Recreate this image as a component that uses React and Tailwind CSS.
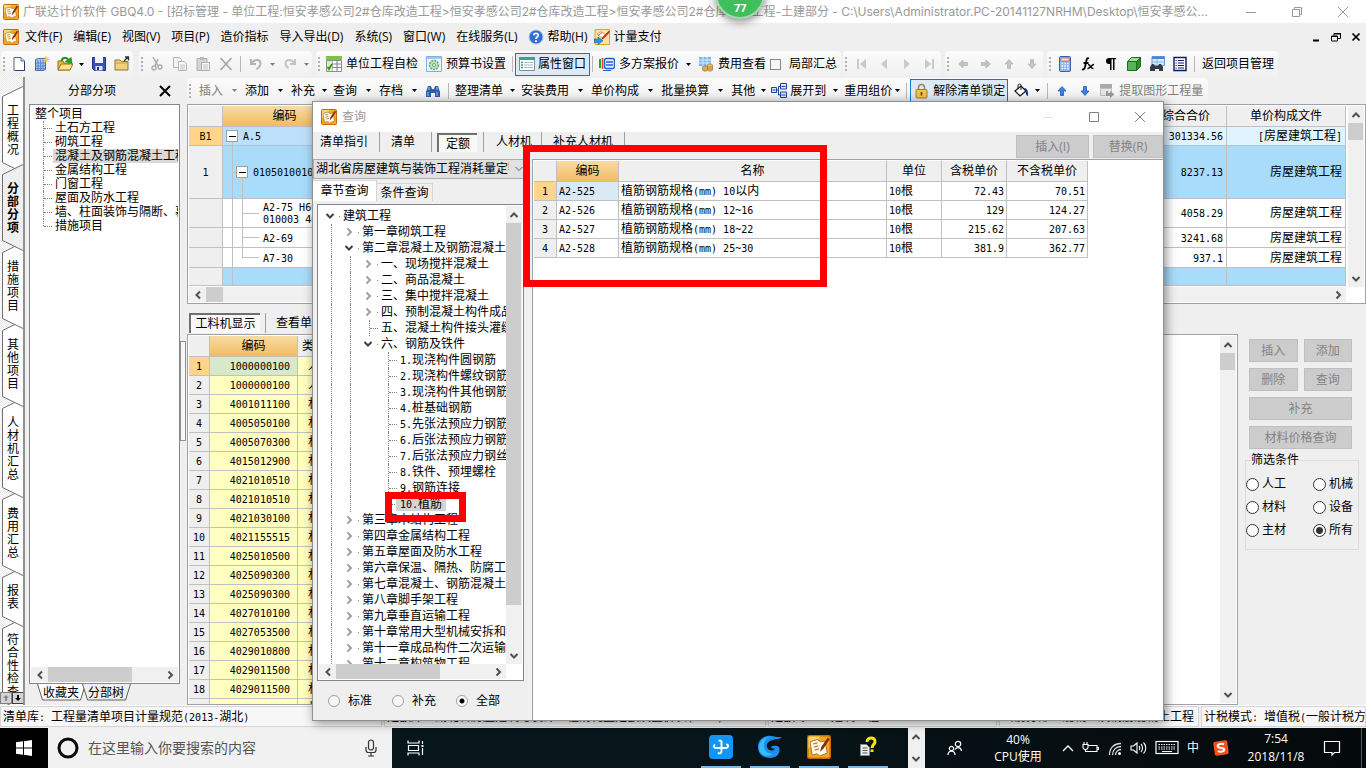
import React from "react";

/* ---------- text ---------- */

function T({ children }) {
  const parts = String(children).split(/([\x20-\x7e]+)/).filter(Boolean);
  return (
    <>
      {parts.map((p, i) =>
        /^[\x20-\x7e]+$/.test(p) ? (
          <span key={i} className="[font-family:'DejaVu_Sans_Mono',monospace] text-[10px] leading-none whitespace-pre">{p}</span>
        ) : (
          <React.Fragment key={i}>{p}</React.Fragment>
        )
      )}
    </>
  );
}

/* ---------- icons ---------- */

function Svg({ w = 16, h = 16, children, className = "" }) {
  return (
    <svg width={w} height={h} viewBox={`0 0 ${w} ${h}`} className={`block shrink-0 ${className}`} fill="none" aria-hidden="true">
      {children}
    </svg>
  );
}

function AppIcon({ size = 16 }) {
  return (
    <svg width={size} height={size} viewBox="0 0 16 16" className="block shrink-0" aria-hidden="true">
      <rect x="0.5" y="0.5" width="15" height="15" rx="1" fill="#f7a81b" stroke="#c8690a" />
      <path d="M1 1h8l-8 8z" fill="#ffd76a" />
      <path d="M2 4.500l5-1.500 2 1.500 3-.5 1.500 8-5 2-2-1.500-3 1z" fill="#fff8e8" stroke="#a8661a" strokeWidth=".6" />
      <path d="M4 6l3-.7M4.500 8l3-.7M5 10l3-.7" stroke="#b07a3a" strokeWidth=".8" />
      <path d="M14 1.500L9.500 8l-.7 3.200 2.200-2.200L15 3z" fill="#8c2a0c" />
    </svg>
  );
}

function Chev({ dir = "down", color = "#505050", size = 10, sw = 2 }) {
  const d = {
    down: "M1.500 3l3.500 3.500L8.500 3",
    up: "M1.500 7L5 3.500 8.500 7",
    left: "M7 1.500L3.500 5 7 8.500",
    right: "M3.500 1.500L7 5 3.500 8.500",
  }[dir];
  return (
    <svg width={size} height={size} viewBox="0 0 10 10" className="block shrink-0" fill="none" aria-hidden="true">
      <path d={d} stroke={color} strokeWidth={sw} />
    </svg>
  );
}

const Caret = ({ w = "w-[11px]", gray }) => (
  <span className={`flex shrink-0 justify-center ${w}`}>
    <Svg w={5} h={3}><path d="M0 0h5L2.500 3z" fill={gray ? "#808080" : "#000"} /></Svg>
  </span>
);

const IcNew = () => (
  <Svg><path d="M3 1.500h7l3.500 3.500v9.500h-10.500z" fill="#fff" stroke="#51658c" /><path d="M10 1.500v3.500h3.500" fill="#dbe6f7" stroke="#51658c" /><path d="M13.500 6v8.500H5" stroke="#273a63" /></Svg>
);
const IcBook = () => (
  <Svg><path d="M1.500 3.500l3-1h7v11l-2 1h-8z" fill="#a9c8ef" stroke="#3d6db5" /><path d="M4 4v10M6.500 4v10M9 4v10M2 7h9M2 10h9M2 12.500h9" stroke="#5a87c9" /><path d="M12 0v7M8.500 3.500h7M9.500 1l5 5M14.500 1l-5 5" stroke="#f7c52c" /></Svg>
);
const IcOpen = () => (
  <Svg><path d="M1 14V5h5l1 2h6v7z" fill="#e8b94a" stroke="#9c7413" /><path d="M1 14l3-6h12l-3 6z" fill="#ffe08a" stroke="#9c7413" /><path d="M4.500 5c1-4 5-4 7-1" stroke="#1d8b1d" strokeWidth="2" /><path d="M7.500 5.500L15.500 8.500 14.500 1z" fill="#22a022" /></Svg>
);
const IcSave = () => (
  <Svg><path d="M1.500 1.500h13v13h-11l-2-2z" fill="#3b4fb8" stroke="#25357c" /><path d="M4 1h8v6H4z" fill="#eef3ff" /><path d="M4.500 10h7v4.500h-7z" fill="#dde5f5" /><path d="M6 11h2v3H6z" fill="#25357c" /></Svg>
);
const IcFolder = () => (
  <Svg><path d="M1 14V4h5l1.500 1.500H14V14z" fill="#f1cf7c" stroke="#8f7436" /><path d="M1 7h13" stroke="#c49c46" /><path d="M10 5l4-4M11 1h3.500v3.500" stroke="#333" strokeWidth="1.300" /></Svg>
);
const IcCut = () => (
  <Svg><path d="M4 1l5 9M9 3L6 10" stroke="#aaa" strokeWidth="1.500" /><circle cx="5" cy="12" r="2" stroke="#aaa" strokeWidth="1.300" /><circle cx="11" cy="11" r="2" stroke="#aaa" strokeWidth="1.300" /></Svg>
);
const IcCopy = () => (
  <Svg><path d="M1.500 1.500h6l2 2v8h-8z" fill="#f2f2f2" stroke="#b5b5b5" /><path d="M6.500 5.500h6l2 2v7h-8z" fill="#f7f7f7" stroke="#b5b5b5" /><path d="M8 9h5M8 11h5M8 13h5" stroke="#c5c5c5" /></Svg>
);
const IcPaste = () => (
  <Svg><path d="M2 2.500h10v12H2z" fill="#d5d5d5" stroke="#b0b0b0" /><path d="M5 1h4v3H5z" fill="#bbb" /><path d="M6.500 6.500h8v8h-8z" fill="#f7f7f7" stroke="#b0b0b0" /><path d="M8 9h5M8 11h5M8 13h5" stroke="#c0c0c0" /></Svg>
);
const IcX = () => <Svg><path d="M2.500 2l11 12M13.500 2l-11 12" stroke="#a8a8a8" strokeWidth="1.800" /></Svg>;
const IcUndo = () => <Svg><path d="M3 3v5h5M3.500 7.500C6 3 12 3 12.500 7c0 3-2 5-4 6" stroke="#b5b5b5" strokeWidth="2" /></Svg>;
const IcRedo = () => <Svg><path d="M13 3v5H8M12.500 7.500C10 3 4 3 3.500 7c0 3 1 4 3 5" stroke="#c5c5c5" strokeWidth="2" /></Svg>;
const IcCheckTable = () => (
  <Svg><path d="M.5 4.500h15v11H.5z" fill="#fff" stroke="#8d8d8d" /><path d="M0 0h16v4H0z" fill="#7dc242" /><path d="M6 4v11M6 8h9M6 11.500h9M11 4v11" stroke="#8d8d8d" strokeWidth="1.200" /><path d="M1 5h5v10H1z" fill="#d7edc3" /><path d="M1.500 11l1.500 2 3-5" stroke="#2c8b1c" strokeWidth="1.600" /></Svg>
);
const IcGear = () => (
  <Svg><path d="M.5.5h15v15H.5z" fill="#eaf4ff" stroke="#7fb0dc" /><path d="M1 1h14v2H1z" fill="#9cc9ee" /><circle cx="8" cy="9" r="4.500" fill="#bfe3c1" stroke="#5fa865" strokeDasharray="2 1" strokeWidth="1.500" /><circle cx="8" cy="9" r="1.500" fill="#fff" stroke="#5fa865" /></Svg>
);
const IcProps = () => (
  <Svg><path d="M.5 1.500h15v13H.5z" fill="#fff" stroke="#7f8fa0" /><path d="M0 1h16v3H0z" fill="#3ba58d" /><path d="M2 6.500h2M2 9h2M2 11.500h2" stroke="#48a548" strokeWidth="1.300" /><path d="M5 6.500h9M5 9h9M5 11.500h9" stroke="#a9b9c9" /></Svg>
);
const IcMulti = () => (
  <Svg><path d="M1 3v9" stroke="#2ca02c" strokeWidth="2" /><path d="M3.500 2v11" stroke="#e34234" strokeWidth="1.500" /><rect x="5.500" y="2.500" width="10" height="10" rx="2" fill="#e8f1ff" stroke="#1f5fd0" strokeWidth="1.400" /><path d="M7 6h7M7 9h7" stroke="#1f5fd0" strokeWidth="1.300" /><path d="M4 14.500h8" stroke="#1f5fd0" /></Svg>
);
const IcCoins = () => (
  <Svg><path d="M1 1h12v9H1z" fill="#7fb6ea" /><path d="M1 4h12M1 7h12M5 1v9M9 1v9" stroke="#d8ecff" /><path d="M4.500 11c0-1.500 5-1.500 5 0v3c0 1.500-5 1.500-5 0z" fill="#dba85a" stroke="#a87427" strokeWidth=".7" /><path d="M9.500 9c0-1.500 5-1.500 5 0v5c0 1.500-5 1.500-5 0z" fill="#e8be74" stroke="#a87427" strokeWidth=".7" /><path d="M9.500 11h5M9.500 13h5" stroke="#a87427" strokeWidth=".7" /></Svg>
);
const Nav = ({ d }) => <Svg><path d={d} fill="#c9c9c9" /></Svg>;
const Arrow = ({ rot, fill = "#c4c4c4", stroke = "#b0b0b0" }) => (
  <Svg><g transform={`rotate(${rot} 8 8)`}><path d="M8 3.500l4 4.500H9.500v4.500h-3V8H4z" fill={fill} stroke={stroke} strokeWidth=".7" /></g></Svg>
);
const IcCalc = () => (
  <Svg><rect x="2.500" y=".5" width="11" height="15" rx="1" fill="#8db1e8" stroke="#3a5fae" /><path d="M4 2h8v3H4z" fill="#fbe0d0" stroke="#b24a3a" strokeWidth=".6" /><path d="M4.500 7.500h7.500M4.500 10h7.500M4.500 12.500h7.500" stroke="#fff" strokeWidth="1.500" strokeDasharray="1.500 1.300" /></Svg>
);
const IcFx = () => (
  <Svg><path d="M9 2.500c-2-1-2.500 1-3 4L5 11c-.4 2-1.500 3-3 2.300M3.500 7h5" stroke="#000" strokeWidth="1.800" /><path d="M8 8.500c2-.5 3 4.500 5.500 4M14 8.500c-2-.5-4 4.500-6.500 4" stroke="#000" strokeWidth="1.500" /></Svg>
);
const IcPara = () => <Svg><path d="M8 2H6a3 3 0 000 6h1v6h1.500V3.200H10V14h1.500V3.200H13V2z" fill="#000" /></Svg>;
const IcCube = () => (
  <Svg><path d="M1.500 5.500h9v9h-9z" fill="#57b457" stroke="#1d6b1d" /><path d="M1.500 5.500l4-4h9l-4 4z" fill="#9fdc9f" stroke="#1d6b1d" /><path d="M10.500 5.500l4-4v9l-4 4z" fill="#2e8b2e" stroke="#1d6b1d" /></Svg>
);
const IcBinTable = () => (
  <Svg><path d="M3 .5h12.500v9H3z" fill="#dcecff" stroke="#6b94cf" /><path d="M3 .5h12.500v2.500H3z" fill="#4d86d8" /><path d="M3 6h12M8 3v6" stroke="#8fb2e2" /><path d="M1 15v-4l2-3h2l1 2h3l1-2h2l2 3v4h-4v-2H6v2z" fill="#333a48" /></Svg>
);
const IcList = () => (
  <Svg><path d="M2 1.500h12v13H2z" fill="#fff" stroke="#0a1a66" strokeWidth="1.400" /><path d="M6 4.500h6M6 7h6M6 9.500h6M6 12h6" stroke="#0a1a66" strokeWidth="1.200" /><path d="M3.500 4.500h1.200M3.500 7h1.200M3.500 9.500h1.200M3.500 12h1.200" stroke="#0a1a66" strokeWidth="1.200" /></Svg>
);
const IcHelp = () => (
  <Svg><circle cx="8" cy="8" r="7" fill="#2f6fd8" stroke="#b4c4de" /><path d="M5.800 6.200C6 3.500 10.500 3.700 10.200 6.500 10 8 8 8.200 8 10" stroke="#fff" strokeWidth="1.800" /><path d="M7 11.200h2v1.800H7z" fill="#fff" /></Svg>
);
const IcPay = () => (
  <Svg><path d="M1 .5h14.500v15H1z" fill="#ffe3a0" stroke="#e0a030" /><path d="M3 5l4-2.500L12 6 8 9z" fill="#fff" stroke="#c98a50" strokeWidth=".7" /><path d="M15 1.500L8.500 8l-1.500 3 3-1.500L16 3z" fill="#c0341a" /><path d="M4 6.500l4-3" stroke="#d9502a" /><path d="M0 10h4V8l5 3.800L4 15.500v-2H0z" fill="#2597e0" stroke="#1568a8" strokeWidth=".6" /></Svg>
);
const IcBinoc = () => (
  <Svg><path d="M1 14V9l2-6h3l1 3h2l1-3h3l2 6v5h-5v-4H6v4z" fill="#2d5fa8" /><path d="M3 9v4M12 9v4M4 4v3M12 4v3" stroke="#9cc3f2" /></Svg>
);
const IcTree = () => (
  <Svg><path d="M.5 4.500h5v5h-5zM9.500 .5h6v5.500h-6zM9.500 9h6v5.500h-6z" fill="#d8e7fa" stroke="#1f4595" /><path d="M5.500 7h2.500M7.500 3.500v8.500M7.500 3.500h2M7.500 12h2" stroke="#1f4595" /><path d="M1.500 7h3M10.500 3.500h4M10.500 12h4" stroke="#1f4595" /></Svg>
);
const IcLock = () => (
  <Svg w={13} h={16}><path d="M3.500 7V4.500a3 3 0 016 0V7" stroke="#9b8b5a" strokeWidth="1.600" /><rect x="1" y="6.500" width="11" height="8.500" rx="1" fill="#f2c14e" stroke="#a87a1c" /><path d="M6.500 9v3.500" stroke="#6b4a0c" strokeWidth="1.700" /></Svg>
);
const IcBucket = () => (
  <Svg><path d="M2 8l6-5 5 5-6 5z" fill="#fff" stroke="#111" strokeWidth="1.200" /><path d="M5 6V2.500C5 .5 8 .5 8 2.500V7" stroke="#111" /><path d="M11 5c3 0 4.500 3 4 8-1.500 0-2.500-3-2.500-5z" fill="#1b2f8f" /></Svg>
);
const IcExtract = () => (
  <Svg><path d="M1 1h12v4H1z" fill="#aaa" /><path d="M1.500 5.500h11v7h-11z" fill="#e6e6e6" stroke="#bdbdbd" /><path d="M7 8v5h4v2l4.500-3.500L11 8v2H9V8z" fill="#9a9a9a" /></Svg>
);

/* ---------- toolbar pieces ---------- */

const Grip = ({ w = "w-[6px]" }) => (
  <span className={`flex shrink-0 flex-col items-center gap-[2px] ${w}`}>
    {[0, 1, 2, 3].map((i) => (
      <span key={i} className="h-[2px] w-[2px] bg-[#b0b0b0]" />
    ))}
  </span>
);
const Sep = ({ w = "w-[7px]" }) => (
  <span className={`flex shrink-0 justify-center ${w}`}>
    <span className="h-4 w-px bg-[#b8b8b8]" />
  </span>
);
const IconBtn = ({ label, children, w = "w-[23px]" }) => (
  <button type="button" aria-label={label} className={`flex h-6 shrink-0 items-center justify-center ${w}`}>{children}</button>
);
const LabelBtn = ({ icon, children }) => (
  <button type="button" className="flex h-6 shrink-0 items-center gap-1 px-1">
    {icon}
    <span>{children}</span>
  </button>
);
const Group = ({ children, className = "" }) => (
  <div className={`flex h-[26px] shrink-0 items-center rounded-sm bg-linear-to-b from-[#fbfbfb] to-[#f0f0f0] ${className}`}>{children}</div>
);
const DropText = ({ children, w = "w-[22px]", gray }) => (
  <button type="button" className={`flex h-6 shrink-0 items-center ${gray ? "text-[#808080]" : ""}`}>
    <span>{children}</span>
    <Caret w={w} gray={gray} />
  </button>
);

function TitleBar() {
  return (
    <header className="relative flex h-[23px] shrink-0 items-center bg-white pl-[3px] text-[#999]">
      <AppIcon />
      <h1 className="ml-1 min-w-0 flex-1 overflow-hidden whitespace-nowrap [font-family:'Inter','Noto_Sans_CJK_SC',sans-serif]">
        广联达计价软件 GBQ4.0 - [招标管理 - 单位工程:恒安孝感公司2#仓库改造工程&gt;恒安孝感公司2#仓库改造工程&gt;恒安孝感公司2#仓库改造工程-土建部分 - C:\Users\Administrator.PC-20141127NRHM\Desktop\恒安孝感公...
      </h1>
      <div className="flex shrink-0">
        <IconBtn label="最小化" w="w-[46px]"><Svg w={10} h={10}><path d="M0 5.500h10" stroke="#999" /></Svg></IconBtn>
        <IconBtn label="还原" w="w-[46px]"><Svg w={10} h={10}><path d="M.5 2.500h7v7h-7zM2.500 2V.5h7v7H8" stroke="#999" /></Svg></IconBtn>
        <IconBtn label="关闭" w="w-[46px]"><Svg w={10} h={10}><path d="M0 0l10 10M10 0L0 10" stroke="#999" /></Svg></IconBtn>
      </div>
      <div className="absolute -top-[31px] left-[54.200%] z-30 flex h-[50px] w-[50px] -translate-x-1/2 items-end justify-center rounded-full border-2 border-[#a5d8b0] bg-[#3fbf5c] text-[11px] leading-[18px] font-bold text-white shadow-[0_3px_8px_rgba(0,0,0,0.45)]">77</div>
    </header>
  );
}

function MenuBar() {
  const items = ["文件(F)", "编辑(E)", "视图(V)", "项目(P)", "造价指标", "导入导出(D)", "系统(S)", "窗口(W)", "在线服务(L)"];
  return (
    <nav className="flex h-7 shrink-0 items-center pl-[3px]">
      <AppIcon />
      <div className="ml-[6px] flex gap-[11px] whitespace-nowrap">
        {items.map((t) => <button key={t} type="button">{t}</button>)}
        <button type="button" className="-ml-px flex items-center gap-1"><IcHelp />帮助(H)</button>
      </div>
      <button type="button" className="ml-[6px] flex items-center gap-1"><IcPay />计量支付</button>
      <div className="ml-auto flex items-center gap-2 pr-1">
        <Svg w={12} h={12}><path d="M3 9.500h6" stroke="#000" strokeWidth="2" /></Svg>
        <Svg w={12} h={12}><path d="M1.500 5h6v5h-6zM4 4.500V2.500h6.500v5H8M1 5.500h7M4 3h7" stroke="#000" /></Svg>
        <Svg w={12} h={12}><path d="M2.500 2.500l7 7M9.500 2.500l-7 7" stroke="#000" strokeWidth="1.700" /></Svg>
      </div>
    </nav>
  );
}

function MainToolbar() {
  return (
    <div className="flex h-[26px] shrink-0 items-center overflow-hidden pl-px whitespace-nowrap">
      <Group>
        <Grip />
        <IconBtn label="新建"><IcNew /></IconBtn>
        <IconBtn label="新建单位工程"><IcBook /></IconBtn>
        <IconBtn label="打开"><IcOpen /></IconBtn>
        <Caret />
        <IconBtn label="保存"><IcSave /></IconBtn>
        <IconBtn label="导出"><IcFolder /></IconBtn>
      </Group>
      <Group className="ml-[6px]">
        <Grip />
        <IconBtn label="剪切"><IcCut /></IconBtn>
        <IconBtn label="复制"><IcCopy /></IconBtn>
        <IconBtn label="粘贴"><IcPaste /></IconBtn>
        <IconBtn label="删除"><IcX /></IconBtn>
        <Sep />
        <IconBtn label="撤销"><IcUndo /></IconBtn>
        <Caret gray />
        <IconBtn label="恢复"><IcRedo /></IconBtn>
        <Caret gray />
      </Group>
      <Group className="ml-1">
        <Grip />
        <LabelBtn icon={<IcCheckTable />}>单位工程自检</LabelBtn>
        <LabelBtn icon={<IcGear />}>预算书设置</LabelBtn>
        <Sep w="w-[5px]" />
        <button type="button" className="flex h-[23px] items-center gap-[3px] border border-[#1177d1] bg-[#dceaf7] px-[3px]"><IcProps />属性窗口</button>
        <Sep w="w-[5px]" />
        <LabelBtn icon={<IcMulti />}>多方案报价</LabelBtn>
        <Caret />
        <LabelBtn icon={<IcCoins />}>费用查看</LabelBtn>
        <label className="flex items-center gap-2 pr-1">
          <input type="checkbox" className="h-[11px] w-[11px] appearance-none border border-[#888] bg-[#f7f7f7]" />
          局部汇总
        </label>
      </Group>
      <Group className="ml-[2px]">
        <Grip />
        <IconBtn label="首条"><Nav d="M4 3h2v10H4zM13 3v10L7 8z" /></IconBtn>
        <IconBtn label="上一条"><Nav d="M11 3v10L5 8z" /></IconBtn>
        <IconBtn label="下一条"><Nav d="M5 3v10l6-5z" /></IconBtn>
        <IconBtn label="末条"><Nav d="M3 3v10l6-5zM10 3h2v10h-2z" /></IconBtn>
      </Group>
      <Group className="ml-1">
        <Grip />
        <IconBtn label="左移"><Arrow rot={-90} /></IconBtn>
        <IconBtn label="右移"><Arrow rot={90} /></IconBtn>
        <IconBtn label="上移"><Arrow rot={0} /></IconBtn>
        <IconBtn label="下移"><Arrow rot={180} /></IconBtn>
      </Group>
      <Group className="ml-1">
        <Grip />
        <IconBtn label="计算器"><IcCalc /></IconBtn>
        <IconBtn label="函数"><IcFx /></IconBtn>
        <IconBtn label="段落"><IcPara /></IconBtn>
        <IconBtn label="图形"><IcCube /></IconBtn>
        <IconBtn label="查表"><IcBinTable /></IconBtn>
        <IconBtn label="列表"><IcList /></IconBtn>
        <Sep />
        <LabelBtn>返回项目管理</LabelBtn>
      </Group>
    </div>
  );
}

function EditToolbar() {
  return (
    <div className="flex h-[27px] shrink-0 items-center overflow-hidden whitespace-nowrap">
      <Group>
        <Grip />
        <span className="w-[6px]" />
        <DropText gray>插入</DropText>
        <DropText>添加</DropText>
        <DropText w="w-[18px]">补充</DropText>
        <DropText>查询</DropText>
        <DropText>存档</DropText>
        <IconBtn label="查找" w="w-4"><IcBinoc /></IconBtn>
        <Sep w="w-[14px]" />
        <DropText w="w-[18px]">整理清单</DropText>
        <DropText>安装费用</DropText>
        <DropText>单价构成</DropText>
        <DropText>批量换算</DropText>
        <DropText w="w-4">其他</DropText>
        <IcTree />
        <span className="w-[3px]" />
        <DropText w="w-[18px]">展开到</DropText>
        <DropText w="w-[11px]">重用组价</DropText>
        <Sep />
        <button type="button" className="flex h-[23px] items-center gap-[5px] border border-[#1177d1] bg-[#dceaf7] pr-[2px] pl-1"><IcLock />解除清单锁定</button>
        <span className="w-[5px]" />
        <IconBtn label="颜色" w="w-4"><IcBucket /></IconBtn>
        <Caret w="w-4" />
        <Sep w="w-[5px]" />
        <IconBtn label="上移"><Arrow rot={0} fill="#3f7fe8" stroke="#1d4fb0" /></IconBtn>
        <IconBtn label="下移"><Arrow rot={180} fill="#3f7fe8" stroke="#1d4fb0" /></IconBtn>
        <button type="button" className="flex items-center gap-1 px-[3px] text-[#808080]"><IcExtract />提取图形工程量</button>
        <span className="w-[2px]" />
      </Group>
    </div>
  );
}

/* ---------- scroll bars ---------- */

const VBar = ({ thumb, className = "" }) => (
  <div className={`flex w-4 shrink-0 flex-col items-center bg-[#f0f0f0] ${className}`}>
    <span className="flex h-[17px] items-center"><Chev dir="up" /></span>
    <div className="flex w-full flex-1 flex-col">
      <div className={`w-[15px] bg-[#cdcdcd] ${thumb}`} />
    </div>
    <span className="flex h-[17px] items-center"><Chev dir="down" /></span>
  </div>
);
const HBar = ({ thumb }) => (
  <div className="flex h-[15px] shrink-0 items-center bg-[#f0f0f0]">
    <span className="flex w-[17px] justify-center"><Chev dir="left" /></span>
    <div className="flex h-full flex-1"><div className={`h-full bg-[#cdcdcd] ${thumb}`} /></div>
    <span className="flex w-[17px] justify-center"><Chev dir="right" /></span>
  </div>
);

/* ---------- left side ---------- */

const sideTabs = [
  { t: "工程概况", h: 87, hc: "h-[87px]", z: "z-[1]" },
  { t: "分部分项", h: 87, hc: "h-[87px]", z: "z-10", active: true },
  { t: "措施项目", h: 87, hc: "h-[87px]", z: "z-[8]" },
  { t: "其他项目", h: 87, hc: "h-[87px]", z: "z-[7]" },
  { t: "人材机汇总", h: 100, hc: "h-[100px]", z: "z-[6]" },
  { t: "费用汇总", h: 87, hc: "h-[87px]", z: "z-[5]" },
  { t: "报表", h: 60, hc: "h-[60px]", z: "z-[4]" },
  { t: "符合性检查", h: 94, hc: "h-[94px]", z: "z-[3]" },
];

function SideTabs() {
  return (
    <div className="relative flex w-[25px] shrink-0 flex-col overflow-hidden border-r-2 border-[#909090] bg-[repeating-conic-gradient(#e9e9e9_0_25%,#fff_0_50%)] bg-size-[2px_2px] pt-[18px]">
      {sideTabs.map((s) => (
        <button key={s.t} type="button" className={`relative -mt-[9px] flex w-[23px] shrink-0 justify-center pl-[3px] ${s.hc} ${s.z}`}>
          <svg width="23" height={s.h} className="absolute top-0 left-0" aria-hidden="true">
            <path d={`M23 .5L2.500 10.500V${s.h - 10.5}L23 ${s.h - 0.5}`} fill={s.active ? "#efefef" : "#fff"} stroke="#707070" />
          </svg>
          <span className={`relative w-3 self-center leading-[13px] break-all ${s.active ? "font-bold" : ""}`}>{s.t}</span>
        </button>
      ))}
      <div className="absolute bottom-px left-0 z-20 flex bg-[#efefef]">
        <button type="button" aria-label="上滚" className="flex h-3 w-3 items-center justify-center border border-[#808080] bg-[#d4d4d4]"><Svg w={8} h={8}><path d="M4 1l3 3H5v3H3V4H1z" fill="#888" /></Svg></button>
        <button type="button" aria-label="下滚" className="flex h-3 w-3 items-center justify-center border border-[#404040] bg-[#d4d4d4]"><Svg w={8} h={8}><path d="M4 7l3-3H5V1H3v3H1z" fill="#000" /></Svg></button>
      </div>
    </div>
  );
}

const sections = ["土石方工程", "砌筑工程", "混凝土及钢筋混凝土工程", "金属结构工程", "门窗工程", "屋面及防水工程", "墙、柱面装饰与隔断、幕墙工程", "措施项目"];

function SectionPanel() {
  return (
    <aside className="flex w-[155px] shrink-0 flex-col pl-1">
      <div className="flex h-[27px] shrink-0 items-center">
        <h2 className="ml-[39px] flex-1">分部分项</h2>
        <button type="button" aria-label="关闭" className="mr-[9px]"><Svg w={12} h={12}><path d="M1 1l10 10M11 1L1 11" stroke="#000" strokeWidth="2" /></Svg></button>
      </div>
      <div className="flex min-h-0 flex-1 flex-col border border-[#828790] bg-white p-px">
        <div className="min-h-0 flex-1 overflow-hidden pt-px">
          <div className="pl-1 leading-[14px]">整个项目</div>
          <ul>
            {sections.map((s, i) => (
              <li key={s} className="flex h-[14px] pl-3 leading-[14px] whitespace-nowrap">
                <span className={`w-px border-l border-dotted border-[#808080] ${i === sections.length - 1 ? "h-[7px]" : "h-full"}`} />
                <span className="mt-[7px] h-px w-2 border-t border-dotted border-[#808080]" />
                <span className={`ml-px flex-1 overflow-hidden pl-[2px] ${i === 2 ? "bg-[#d9d9d9]" : ""}`}>{s}</span>
              </li>
            ))}
          </ul>
        </div>
        <HBar thumb="w-[74%]" />
      </div>
      <div className="flex h-[21px] shrink-0 items-start pl-2">
        {["收藏夹", "分部树"].map((t, i) => (
          <button key={t} type="button" className={`relative h-[17px] w-[48px] ${i ? "-ml-[3px]" : ""}`}>
            <svg width="50" height="17" className="absolute top-0 left-0" aria-hidden="true"><path d="M.5 0l5 16h38l5-16" fill={i ? "#efefef" : "#fff"} stroke="#606060" /></svg>
            <span className="relative leading-4">{t}</span>
          </button>
        ))}
      </div>
    </aside>
  );
}

/* ---------- tables ---------- */

const line = "border-[#c0c0c0]";
const orange = "bg-linear-to-b from-[#f9dba2] to-[#f0bd60] font-normal";

const MinusBox = () => (
  <span className="relative z-[1] flex h-3 w-3 shrink-0 items-center justify-center border border-[#a0a0a0] bg-white"><span className="h-px w-[7px] bg-black" /></span>
);

function CodeTree({ level, last, h, children }) {
  return (
    <div className={`relative flex items-center overflow-hidden whitespace-nowrap ${h}`}>
      {level === 0 && (
        <>
          <span className="w-[3px]" /><MinusBox /><span className="w-[5px]" />
          <span className={`absolute bottom-0 left-[9px] h-1 border-l ${line}`} />
        </>
      )}
      {level === 1 && (
        <>
          <span className={`w-[10px] self-stretch border-r ${line}`} />
          <span className="h-px w-[3px] bg-[#c0c0c0]" /><MinusBox /><span className="w-[5px]" />
          <span className={`absolute bottom-0 left-[19px] h-1/2 border-l ${line}`} />
        </>
      )}
      {level === 2 && (
        <>
          <span className={`w-[10px] self-stretch border-r ${line}`} />
          <span className={`w-[10px] border-r ${line} ${last ? "h-1/2 self-start" : "self-stretch"}`} />
          <span className="h-px w-4 bg-[#c0c0c0]" /><span className="w-1" />
        </>
      )}
      {level === 3 && <span className={`w-[10px] self-stretch border-r ${line}`} />}
      <span className="leading-3">{children}</span>
    </div>
  );
}

const billRows = [
  { no: "B1", code: "A.5", level: 0, h: "h-[18px]", total: "301334.56", file: "[房屋建筑工程]", left: "bg-[#bde0fa]", right: "bg-[#e1f3ff]" },
  { no: "1", code: "010501001001", level: 1, h: "h-[52px]", total: "8237.13", file: "房屋建筑工程", left: "bg-[#a9dbfb]", right: "bg-[#a9dbfb]" },
  { no: "", code: "A2-75 H60", code2: "010003 40", level: 2, h: "h-[28px]", total: "4058.29", file: "房屋建筑工程" },
  { no: "", code: "A2-69", level: 2, h: "h-[19px]", total: "3241.68", file: "房屋建筑工程" },
  { no: "", code: "A7-30", level: 2, last: true, h: "h-[19px]", total: "937.1", file: "房屋建筑工程" },
  { no: "", code: "", level: 3, h: "h-[17px]", total: "", file: "", left: "bg-[#a9dbfb]", right: "bg-[#a9dbfb]" },
];

function BillTable() {
  return (
    <div className="flex h-[200px] shrink-0 flex-col border border-[#a0a0a8] bg-white p-px">
      <div className="flex min-h-0 flex-1 overflow-hidden">
        <div className="min-w-0 flex-1">
          <table className="w-full table-fixed border-separate border-spacing-0">
            <colgroup><col className="w-[34px]" /><col className="w-[124px]" /><col /><col className="w-[90px]" /><col className="w-[119px]" /></colgroup>
            <thead>
              <tr className="h-[21px] bg-[#efefef]">
                <th className={`border-r border-b p-0 ${line}`} />
                <th className={`border-r border-b p-0 ${line} ${orange}`}>编码</th>
                <th className={`border-r border-b p-0 ${line}`} />
                <th className={`border-r border-b p-0 pr-4 text-right font-normal ${line}`}>综合合价</th>
                <th className={`border-r border-b p-0 font-normal ${line}`}>单价构成文件</th>
              </tr>
            </thead>
            <tbody>
              {billRows.map((r, i) => (
                <tr key={i}>
                  <td className={`border-r border-b p-0 text-center ${line} ${i === 0 ? "bg-[#ffd58c]" : "bg-[#efefef]"}`}><T>{r.no}</T></td>
                  <td className={`border-r border-b p-0 ${line} ${r.left || ""}`}>
                    <CodeTree level={r.level} last={r.last} h={r.h}><T>{r.code}</T>{r.code2 && <><br /><T>{r.code2}</T></>}</CodeTree>
                  </td>
                  <td className={`border-r border-b p-0 ${line} ${r.right || ""}`} />
                  <td className={`border-r border-b p-0 pr-[3px] text-right ${line} ${r.right || ""}`}><T>{r.total}</T></td>
                  <td className={`border-r border-b p-0 pr-[3px] text-right ${line} ${r.right || ""}`}><T>{r.file}</T></td>
                </tr>
              ))}
            </tbody>
          </table>
        </div>
        <VBar className="ml-[2px]" thumb="h-[17px]" />
      </div>
      <div className="mr-[18px]"><HBar thumb="w-[17px]" /></div>
    </div>
  );
}

const resCodes = ["1000000100", "1000000100", "4001011100", "4005050100", "4005070300", "4015012900", "4021010510", "4021010510", "4021030100", "4021155515", "4025010500", "4025090300", "4025090300", "4027010100", "4027053500", "4029010800", "4029011500", "4029011500", "4030200111"];

function ResourceTable() {
  return (
    <div className="flex min-w-0 flex-1 overflow-hidden border border-[#a0a0a8] bg-white p-px">
      <div className="min-w-0 flex-1">
        <table className="w-[320px] table-fixed border-separate border-spacing-0">
          <colgroup><col className="w-[21px]" /><col className="w-[88px]" /><col className="w-[35px]" /><col /></colgroup>
          <thead>
            <tr className="h-[21px] bg-[#efefef]">
              <th className={`border-r border-b p-0 ${line}`} />
              <th className={`border-r border-b p-0 ${line} ${orange}`}>编码</th>
              <th className={`border-r border-b p-0 pl-1 text-left font-normal whitespace-nowrap ${line}`}>类别</th>
              <th className={`border-r border-b p-0 ${line}`} />
            </tr>
          </thead>
          <tbody>
            {resCodes.map((c, i) => (
              <tr key={i} className="h-[19px]">
                <td className={`border-r border-b p-0 text-center leading-4 ${line} ${i === 0 ? "bg-[#ffd58c]" : "bg-[#efefef]"}`}><T>{i + 1}</T></td>
                <td className={`border-r border-b p-0 pr-[7px] text-right leading-4 ${line} ${i === 0 ? "bg-[#d8e9c8]" : "bg-[#ffffc0]"}`}><T>{c}</T></td>
                <td className={`border-r border-b bg-[#ffffc0] p-0 pl-[10px] leading-4 ${line}`}>{i < 2 ? "人" : "材"}</td>
                <td className={`border-r border-b bg-[#ffffc0] p-0 ${line}`} />
              </tr>
            ))}
          </tbody>
        </table>
      </div>
      <VBar thumb="h-[17px]" />
    </div>
  );
}

const GrayBtn = ({ children, className = "" }) => (
  <button type="button" disabled className={`h-[23px] border border-[#bfbfbf] bg-[#cccccc] text-[#838383] ${className}`}>{children}</button>
);

const radioBase = "h-[13px] w-[13px] shrink-0 appearance-none rounded-full border bg-white";

function SideButtons() {
  const opts = ["人工", "机械", "材料", "设备", "主材", "所有"];
  return (
    <div className="flex w-[128px] shrink-0 flex-col pt-[5px] pr-[7px] pl-[7px]">
      <div className="ml-1 grid w-[103px] grid-cols-2 gap-x-[6px] gap-y-[6px]">
        <GrayBtn>插入</GrayBtn>
        <GrayBtn>添加</GrayBtn>
        <GrayBtn>删除</GrayBtn>
        <GrayBtn>查询</GrayBtn>
        <GrayBtn className="col-span-2">补充</GrayBtn>
        <GrayBtn className="col-span-2">材料价格查询</GrayBtn>
      </div>
      <fieldset className="mt-[3px] h-[98px] border border-[#dcdcdc]">
        <legend className="ml-[5px] leading-4">筛选条件</legend>
        <div className="grid grid-cols-[67px_1fr] gap-y-[7px] pt-2">
          {opts.map((o) => (
            <label key={o} className="flex h-4 items-center gap-[3px] whitespace-nowrap">
              <input type="radio" name="filter" defaultChecked={o === "所有"} className={`${radioBase} border-[#333] checked:bg-[radial-gradient(circle,#333_0_3px,#fff_4px)]`} />
              {o}
            </label>
          ))}
        </div>
      </fieldset>
    </div>
  );
}

/* ---------- query dialog ---------- */

const nodes = [
  [0, "open", "建筑工程"],
  [1, "closed", "第一章砌筑工程"],
  [1, "open", "第二章混凝土及钢筋混凝土工程"],
  [2, "closed", "一、现场搅拌混凝土"],
  [2, "closed", "二、商品混凝土"],
  [2, "closed", "三、集中搅拌混凝土"],
  [2, "closed", "四、预制混凝土构件成品"],
  [2, "leaf", "五、混凝土构件接头灌缝"],
  [2, "open", "六、钢筋及铁件"],
  [3, "leaf", "1.现浇构件圆钢筋"],
  [3, "leaf", "2.现浇构件螺纹钢筋"],
  [3, "leaf", "3.现浇构件其他钢筋"],
  [3, "leaf", "4.桩基础钢筋"],
  [3, "leaf", "5.先张法预应力钢筋"],
  [3, "leaf", "6.后张法预应力钢筋"],
  [3, "leaf", "7.后张法预应力钢丝束"],
  [3, "leaf", "8.铁件、预埋螺栓"],
  [3, "leaf", "9.钢筋连接"],
  [3, "last", "10.植筋"],
  [1, "closed", "第三章木结构工程"],
  [1, "closed", "第四章金属结构工程"],
  [1, "closed", "第五章屋面及防水工程"],
  [1, "closed", "第六章保温、隔热、防腐工程"],
  [1, "closed", "第七章混凝土、钢筋混凝土"],
  [1, "closed", "第八章脚手架工程"],
  [1, "closed", "第九章垂直运输工程"],
  [1, "closed", "第十章常用大型机械安拆和"],
  [1, "closed", "第十一章成品构件二次运输"],
  [1, "closed", "第十二章构筑物工程"],
];

function ChapterTree() {
  return (
    <ul className="min-h-0 min-w-0 flex-1 overflow-hidden pt-[2px]">
      {nodes.map(([level, kind, text]) => (
        <li key={text} className="flex h-4 items-center leading-4 whitespace-nowrap">
          {Array.from({ length: level }, (_, g) => (
            <span key={g} className="flex w-[19px] shrink-0 self-stretch pl-3">
              {g < 2 && <span className="border-l border-dotted border-[#808080]" />}
            </span>
          ))}
          <span className="flex w-6 shrink-0 items-center self-stretch">
            {kind === "open" || kind === "closed" ? (
              <>
                <span className="w-[6px]" />
                <Chev dir={kind === "open" ? "down" : "right"} color={kind === "open" ? "#404040" : "#a0a0a0"} />
                <span className="ml-1 h-px w-px bg-[#808080]" />
              </>
            ) : (
              <>
                <span className={`ml-3 border-l border-dotted border-[#808080] ${kind === "last" ? "h-1/2 self-start" : "self-stretch"}`} />
                <span className="w-2 border-t border-dotted border-[#808080]" />
              </>
            )}
          </span>
          <span className={kind === "last" ? "-ml-1 h-[14px] bg-[#d4d4d4] pr-1 pl-1 leading-[14px]" : ""}><T>{text}</T></span>
        </li>
      ))}
    </ul>
  );
}

const quota = [
  ["A2-525", "植筋钢筋规格(mm) 10以内", "10根", "72.43", "70.51"],
  ["A2-526", "植筋钢筋规格(mm) 12~16", "10根", "129", "124.27"],
  ["A2-527", "植筋钢筋规格(mm) 18~22", "10根", "215.62", "207.63"],
  ["A2-528", "植筋钢筋规格(mm) 25~30", "10根", "381.9", "362.77"],
];

const DTab = ({ children, className = "" }) => (
  <button type="button" className={`h-5 border-r border-[#a0a0a0] text-left ${className}`}>{children}</button>
);

function QueryDialog() {
  return (
    <section role="dialog" aria-label="查询" className="absolute top-[101px] left-[312px] z-20 flex h-[620px] w-[852px] flex-col border border-[#909090] bg-[#efefef] shadow-[2px_2px_10px_rgba(0,0,0,0.45)]">
      <div className="flex h-[30px] shrink-0 items-center bg-white pl-2 text-[#999]">
        <AppIcon />
        <h2 className="ml-[5px] flex-1">查询</h2>
        <button type="button" aria-label="最小化" className="flex w-[46px] justify-center"><Svg w={10} h={10}><path d="M0 5.500h10" stroke="#e0e0e0" /></Svg></button>
        <button type="button" aria-label="最大化" className="flex w-[46px] justify-center"><Svg w={10} h={10}><path d="M.5.5h9v9h-9z" stroke="#808080" /></Svg></button>
        <button type="button" aria-label="关闭" className="flex w-[46px] justify-center"><Svg w={10} h={10}><path d="M0 0l10 10M10 0L0 10" stroke="#808080" /></Svg></button>
      </div>
      <div className="flex h-[27px] shrink-0 items-start overflow-hidden">
        <DTab className="w-[67px] pl-[7px]">清单指引</DTab>
        <DTab className="w-[52px] pl-[11px]">清单</DTab>
        <button type="button" className="mt-px ml-[5px] h-[19px] w-10 border-t-2 border-l-2 border-[#707070] bg-[#f8f8f8] leading-4">定额</button>
        <DTab className="w-[7px]">{""}</DTab>
        <DTab className="w-[58px] pl-3">人材机</DTab>
        <DTab className="w-[83px] pl-[11px]">补充人材机</DTab>
        <GrayBtn className="mt-[3px] ml-auto w-[73px]">插入(I)</GrayBtn>
        <GrayBtn className="mt-[3px] ml-1 w-[70px]">替换(R)</GrayBtn>
      </div>
      <div className="flex min-h-0 flex-1">
        <div className="flex w-[213px] shrink-0 flex-col">
          <div className="relative flex h-5 shrink-0">
            <select aria-label="定额库" className="h-5 w-full appearance-none overflow-hidden border border-[#adadad] bg-[#e1e1e1] pr-4 pl-[2px] leading-4 text-clip">
              <option>湖北省房屋建筑与装饰工程消耗量定额</option>
            </select>
            <span className="pointer-events-none absolute top-[5px] right-[2px]"><Chev color="#606060" sw={1} /></span>
          </div>
          <div className="flex h-[25px] shrink-0 items-end pb-[3px]">
            <button type="button" className="h-[21px] w-16 border-t border-r border-[#d5d5d5] bg-white">章节查询</button>
            <button type="button" className="h-[18px] w-[56px] border-t border-r border-[#d5d5d5] leading-[18px]">条件查询</button>
          </div>
          <div className="mr-[2px] ml-1 flex min-h-0 flex-1 flex-col border border-[#828790] bg-white p-px">
            <div className="flex min-h-0 flex-1">
              <ChapterTree />
              <VBar thumb="h-[90%]" />
            </div>
            <div className="mr-4"><HBar thumb="w-[68%]" /></div>
          </div>
          <div className="flex h-[39px] shrink-0 items-center gap-5 pl-[15px]">
            {["标准", "补充", "全部"].map((o) => (
              <label key={o} className="flex items-center gap-2">
                <input type="radio" name="scope" defaultChecked={o === "全部"} className="h-[12px] w-[12px] shrink-0 appearance-none rounded-full border border-[#a0a0a0] bg-[#f7f7f7] checked:bg-[radial-gradient(circle,#000_0_2px,#fff_3px)]" />
                {o}
              </label>
            ))}
          </div>
        </div>
        <div className="ml-[6px] min-w-0 flex-1 border-t border-l border-[#a0a0a8] bg-white pt-px pl-px">
          <table className="w-[554px] table-fixed border-separate border-spacing-0">
            <colgroup><col className="w-[23px]" /><col className="w-[62px]" /><col /><col className="w-[55px]" /><col className="w-[65px]" /><col className="w-[81px]" /></colgroup>
            <thead>
              <tr className="h-[21px] bg-[#efefef]">
                <th className={`border-r border-b p-0 ${line}`} />
                {["编码", "名称", "单位", "含税单价", "不含税单价"].map((t, i) => (
                  <th key={t} className={`border-r border-b p-0 font-normal ${line} ${i === 0 ? orange : ""}`}>{t}</th>
                ))}
              </tr>
            </thead>
            <tbody>
              {quota.map((q, i) => (
                <tr key={q[0]} className="h-[19px]">
                  <td className={`border-r border-b p-0 text-center leading-4 ${line} ${i === 0 ? "bg-[#ffd58c]" : "bg-[#efefef]"}`}><T>{i + 1}</T></td>
                  {q.map((c, j) => (
                    <td key={j} className={`border-r border-b p-0 px-[2px] leading-4 whitespace-nowrap ${line} ${j > 2 ? "text-right" : "text-left"} ${i === 0 && j === 0 ? "bg-[#d9e9f7]" : ""}`}><T>{c}</T></td>
                  ))}
                </tr>
              ))}
            </tbody>
          </table>
        </div>
      </div>
    </section>
  );
}

/* ---------- bottom ---------- */

function StatusBar() {
  const cell = "overflow-hidden border border-[#d5d5d5] bg-[#f7f7f7] pl-[2px] leading-5 whitespace-nowrap";
  return (
    <footer className="flex h-[23px] shrink-0 gap-[2px] overflow-hidden border-t border-[#fff] pb-px">
      <div className={`w-[382px] shrink-0 ${cell}`}><T>清单库: 工程量清单项目计量规范(2013-湖北)</T></div>
      <div className={`w-[382px] shrink-0 ${cell}`}><T>定额库: 湖北省房屋建筑与装饰工程消耗量定额及全价表(2013)</T></div>
      <div className={`w-[229px] shrink-0 ${cell}`}><T>定额专业: 建筑工程</T></div>
      <div className={`w-[200px] shrink-0 ${cell}`}><T>当前分部: 混凝土及钢筋混凝土工程</T></div>
      <div className={`flex-1 ${cell}`}><T>计税模式: 增值税(一般计税方法)</T></div>
    </footer>
  );
}

const TaskApp = ({ label, children }) => (
  <button type="button" aria-label={label} className="flex h-10 w-10 items-center justify-center border-b-2 border-[#76b9ed]">{children}</button>
);

function Taskbar() {
  return (
    <footer className="flex h-10 shrink-0 items-center bg-linear-to-r from-[#08171d] via-[#07161b] to-[#05090b] text-white">
      <button type="button" aria-label="开始" className="flex h-10 w-12 items-center justify-center bg-black">
        <Svg><path d="M0 2.300l7-1v6.200H0zM8 1.200L16 0v7.500H8zM0 8.500h7v6.200l-7-1zM8 8.500h8V16l-8-1.200z" fill="#fff" /></Svg>
      </button>
      <div className="flex h-10 w-[344px] items-center bg-[#f1f1f1] pl-[9px]">
        <Svg w={22} h={22}><circle cx="11" cy="11" r="9" stroke="#0a0a0a" strokeWidth="3" /></Svg>
        <input aria-label="搜索" placeholder="在这里输入你要搜索的内容" className="ml-[9px] min-w-0 flex-1 bg-transparent text-[14px] text-black outline-none placeholder:text-[#555]" />
        <Svg w={14} h={18} className="mr-[14px]"><rect x="4.500" y="1" width="5" height="10" rx="2.500" stroke="#333" strokeWidth="1.200" /><path d="M2 8v3c0 1.500 1 2.500 2.500 2.500h5C11 13.500 12 12.500 12 11V8M7 13.500V17M4 17h6" stroke="#333" strokeWidth="1.200" /></Svg>
      </div>
      <button type="button" aria-label="任务视图" className="ml-[15px]">
        <Svg w={18} h={16}><path d="M1 .5V3h11V.5M1 15.500V13h11v2.500M1.500 5.500h10v5h-10z" stroke="#fff" strokeWidth="1.200" /><path d="M15.500 1v3M15.500 8v7" stroke="#fff" strokeWidth="1.200" /><path d="M14.500 5h2v2h-2z" fill="#fff" /></Svg>
      </button>
      <div className="ml-auto flex items-center">
        <div className="mr-5 flex gap-[9px]">
          <TaskApp label="云应用">
            <Svg w={24} h={24}><rect width="24" height="24" rx="4" fill="#1296f5" /><path d="M12.500 6.500v9c0 2-1 3.200-3 2.800M12.500 7c0-1.200-1-1.800-2.200-1.300M5.500 10c-1.500 1-.5 3 1.500 3h10c2.500 0 2.800-3 .8-3.500" stroke="#fff" strokeWidth="1.900" strokeLinecap="round" /></Svg>
          </TaskApp>
          <TaskApp label="浏览器">
            <Svg w={24} h={24}><path d="M24 2c-3 3-5 1-9 3-5 1-7 4-6 7 1 4 7 5 8 1-1 1-3 1-4-1 2-1 5-2 8 0 2 6-2 11-9 11C4 23 0 18 0 12 0 5 6 0 13 1c4 0 7 2 11 1z" fill="#1b8ff0" /><path d="M1 13C1 6 6 2 12 2c-4 1-7 5-6 10 1 5 5 7 9 7-6 4-14 1-14-6z" fill="#39bdf8" /></Svg>
          </TaskApp>
          <TaskApp label="广联达计价软件"><AppIcon size={24} /></TaskApp>
          <TaskApp label="帮助文档">
            <Svg w={20} h={22}><path d="M2.500 8.500h6l3 3v8h-9z" fill="#eee" stroke="#888" /><path d="M4.500 12h5M4.500 14.500h5M4.500 17h5" stroke="#555" /><path d="M9 6c0-5.500 8.500-5.500 8 0C17 8.500 14 8.500 14 12" stroke="#f7e600" strokeWidth="3" /><path d="M12.500 13.500h3V16h-3z" fill="#f7e600" /></Svg>
          </TaskApp>
        </div>
        <div className="flex h-10 w-[17px] flex-col items-center justify-between bg-[#f0f0f0] py-1"><Chev dir="up" /><Chev /></div>
        <Svg w={16} h={16} className="ml-[22px]"><circle cx="11" cy="4" r="2.700" stroke="#fff" strokeWidth="1.200" /><circle cx="4.500" cy="8.500" r="2.200" stroke="#fff" strokeWidth="1.200" /><path d="M1 15c0-5 7-5 7 0M8 9.500c2-3 6-2.500 6.500 1.500" stroke="#fff" strokeWidth="1.200" /></Svg>
        <div className="ml-[31px] w-[48px] text-center leading-[17px] whitespace-nowrap">40%<br />CPU使用</div>
        <div className="ml-5 flex items-center gap-2">
          <Svg w={12} h={16}><path d="M1 11l5-5 5 5" stroke="#fff" strokeWidth="1.300" /></Svg>
          <Svg w={17} h={16}><path d="M6 5.500h9v6H5.500M15 7.500h1.500v2H15M1 4.500h5v2.500a2.500 2.500 0 01-5 0zM2 2v2.500M5 2v2.500M3.500 9.500v2h2" stroke="#fff" strokeWidth="1.100" /></Svg>
          <Svg w={15} h={16}><path d="M2.500 15C2.500 8 7 3.500 14 3.500M5.500 15c0-5 3.500-8.500 8.500-8.500M8.500 15c0-3 2.500-5.500 5.500-5.500" stroke="#ddd" strokeWidth="1.300" /><circle cx="12.500" cy="13.500" r="1.500" fill="#fff" /></Svg>
          <Svg w={17} h={16}><path d="M1 6h2.500L7 3v10l-3.500-3H1zM9 6c1 1 1 3 0 4M11 4c2 2 2 6 0 8M13.500 2.500c3 3 3 8 0 11" stroke="#fff" strokeWidth="1.100" /></Svg>
          <Svg w={24} h={16}><rect x="1" y="1.500" width="22" height="12" stroke="#fff" strokeWidth="1.200" /><path d="M3.500 4.500h17M3.500 7h17M3.500 9h17" stroke="#fff" strokeDasharray="1.500 1" /><path d="M7 11.500h10" stroke="#fff" /></Svg>
          <span className="text-[12px] leading-4">中</span>
        </div>
        <Svg w={16} h={16} className="ml-[14px]"><g transform="rotate(-8 8 8)"><rect x="1" y="1" width="14" height="14" rx="2" fill="#f4511e" /><path d="M11.500 4.800C9 3 4.500 4 5 6.300c.5 2 6.300 1.300 6 3.700-.3 2-4.500 2.300-6.500.5" stroke="#fff" strokeWidth="2" /></g></Svg>
        <div className="ml-4 w-[62px] text-center leading-[18px] whitespace-nowrap">7:54<br />2018/11/8</div>
        <Svg w={18} h={18} className="ml-4"><path d="M1.500 2.500h15v11h-5l-2.500 2.500V13.500h-7.500z" stroke="#fff" strokeWidth="1.200" /></Svg>
        <span className="ml-5 h-10 w-px bg-[#50595c]" />
        <span className="w-1" />
      </div>
    </footer>
  );
}

export default function App() {
  return (
    <div className="relative flex h-screen flex-col overflow-hidden bg-[#efefef] text-[12px] leading-4 text-black [font-family:'Open_Sans','Noto_Sans_CJK_SC',sans-serif]">
      <TitleBar />
      <MenuBar />
      <MainToolbar />
      <main className="flex min-h-0 flex-1">
        <SideTabs />
        <SectionPanel />
        <div className="flex w-[7px] shrink-0 items-center"><span className="h-[100px] w-[6px] border border-[#909090] bg-[#f7f7f7]" /></div>
        <div className="flex min-w-0 flex-1 flex-col">
          <EditToolbar />
          <BillTable />
          <div className="flex h-[30px] shrink-0 items-start pt-[9px]">
            <button type="button" className="ml-[2px] h-5 w-[71px] border-t-2 border-l-2 border-[#707070] bg-[#f8f8f8]">工料机显示</button>
            <span className="ml-[5px] h-5 w-px bg-[#a0a0a0]" />
            <button type="button" className="ml-[10px] h-5">查看单价构成</button>
          </div>
          <div className="flex min-h-0 flex-1">
            <ResourceTable />
            <SideButtons />
          </div>
        </div>
      </main>
      <StatusBar />
      <Taskbar />

      <QueryDialog />
      <div className="pointer-events-none absolute top-[145px] left-[523px] z-30 h-[142px] w-[304px] border-[7px] border-[#fe0000]" />
      <div className="pointer-events-none absolute top-[492px] left-[385px] z-30 h-[30px] w-[81px] border-[7px] border-[#fe0000]" />
    </div>
  );
}
